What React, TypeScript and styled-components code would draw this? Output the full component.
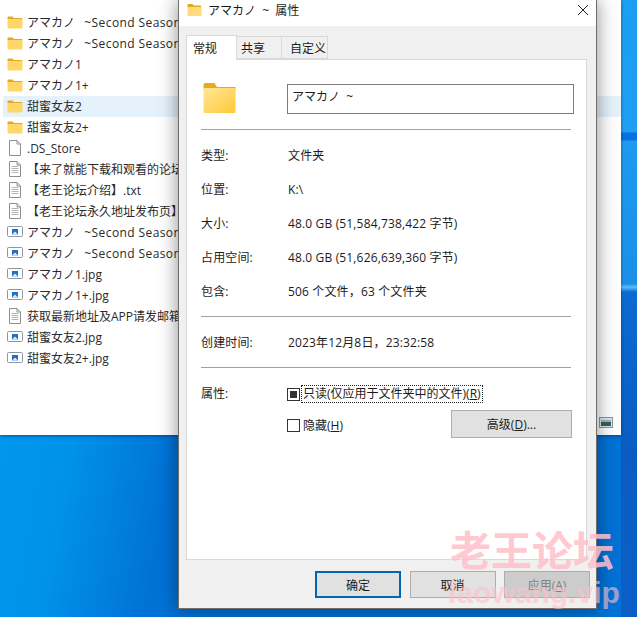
import styled, { createGlobalStyle } from "styled-components";

const GlobalStyle = createGlobalStyle`
  html, body {
    margin: 0;
    padding: 0;
    height: 100%;
    overflow: hidden;
  }
  * {
    box-sizing: border-box;
  }
  body {
    font-family: "Open Sans", "Noto Sans CJK SC", sans-serif;
    font-size: 12px;
    color: #1c1c1c;
  }
`;

const Desktop = styled.div`
  position: relative;
  width: 637px;
  height: 617px;
  overflow: hidden;
  background:
    linear-gradient(
        to bottom,
        #1b9ff0 0,
        #1f9ef2 132px,
        #0870e0 133px,
        #0870e0 140px,
        #1e9af0 141px,
        #1b8fe8 284px,
        #5cc0f5 287px,
        #0c6ad2 292px,
        #0a5cc2 450px,
        #0a5fc6 617px
      )
      right top / 16px 100% no-repeat,
    linear-gradient(100deg, #009cf2 0%, #0092ea 20%, #0072d6 34%);
`;

const Explorer = styled.div`
  position: absolute;
  left: 0;
  top: 0;
  width: 621px;
  height: 435px;
  padding-top: 12px;
  background: #fff;
  box-shadow: 0 1px 3px rgba(0, 40, 90, 0.6);
`;

const FileRow = styled.div<{ $selected?: boolean }>`
  display: flex;
  align-items: center;
  gap: 4px;
  height: 21px;
  margin-left: 3px;
  padding: 0 0 1px 4px;
  font-size: 12px;
  white-space: pre;
  overflow: hidden;
  color: #2a2a2a;
  background: ${({ $selected }) => ($selected ? "#e5f1fb" : "transparent")};
`;

const SeasonName = styled.span`
  letter-spacing: 0.4px;
`;

const RowIcon = styled.svg`
  flex: none;
  width: 16px;
  height: 16px;
`;

const EdgeIcon = styled.svg`
  position: absolute;
  right: 8px;
  bottom: 7px;
  width: 14px;
  height: 11px;
`;

const Dialog = styled.div`
  position: absolute;
  left: 178px;
  top: 0;
  width: 419px;
  height: 609px;
  display: flex;
  flex-direction: column;
  background: #f0f0f0;
  border: 1px solid #6e6e6e;
  border-top: none;
  box-shadow: 0 0 18px rgba(0, 0, 0, 0.45);
`;

const TitleBar = styled.div`
  display: flex;
  align-items: center;
  height: 26px;
  padding: 0 7px 6px 8px;
  background: #fff;
  white-space: pre;
`;

const TitleText = styled.span`
  flex: 1;
  margin-left: 5px;
`;

const TabStrip = styled.div`
  display: flex;
  align-items: flex-end;
  height: 33px;
  margin-left: 7px;
`;

const Tab = styled.div<{ $active?: boolean; $width: number; $indent: number }>`
  position: relative;
  z-index: ${({ $active }) => ($active ? 1 : 0)};
  display: flex;
  align-items: center;
  width: ${({ $width }) => $width}px;
  height: ${({ $active }) => ($active ? "25px" : "23px")};
  padding-left: ${({ $indent }) => $indent}px;
  margin-bottom: ${({ $active }) => ($active ? "-1px" : "0")};
  background: ${({ $active }) => ($active ? "#fff" : "#f0f0f0")};
  border: 1px solid #d9d9d9;
  border-bottom: ${({ $active }) => ($active ? "none" : "1px solid #d9d9d9")};
  border-left: ${({ $active }) => ($active ? "1px solid #d9d9d9" : "none")};
`;

const TabPanel = styled.div`
  height: 501px;
  margin: 0 9px 0 7px;
  padding: 23px 15px 0 14px;
  background: #fff;
  border: 1px solid #d9d9d9;
`;

const NameRow = styled.div`
  display: flex;
  align-items: flex-start;
  gap: 51px;
  padding-left: 2px;
  height: 46px;
`;

const BigFolder = styled.svg`
  flex: none;
  width: 33px;
  height: 32px;
  margin-top: -1px;
`;

const NameInput = styled.div`
  flex: none;
  width: 287px;
  height: 30px;
  margin-top: 1px;
  padding: 2px 4px;
  border: 1px solid #7a7a7a;
  white-space: pre;
`;

const Divider = styled.div`
  height: 1px;
  width: 370px;
  background: #a0a0a0;
`;

const InfoGroup = styled.div`
  padding: 8px 0;
`;

const InfoRow = styled.div`
  display: grid;
  grid-template-columns: 87px 1fr;
  align-items: center;
  height: 34px;
  letter-spacing: 0.15px;
`;

const AttrGroup = styled.div`
  display: grid;
  grid-template-columns: 86px 1fr;
  padding-top: 17px;
`;

const AttrLabel = styled.div`
  line-height: 17px;
`;

const CheckRow = styled.div`
  display: flex;
  align-items: center;
  gap: 2px;
  height: 18px;
`;

const CheckBox = styled.span<{ $mixed?: boolean }>`
  display: flex;
  align-items: center;
  justify-content: center;
  flex: none;
  width: 13px;
  height: 13px;
  border: 1px solid #333;
  background: #fff;
  &::after {
    content: "";
    display: ${({ $mixed }) => ($mixed ? "block" : "none")};
    width: 7px;
    height: 7px;
    background: #333;
  }
`;

const FocusLabel = styled.span`
  padding: 0 1px;
  line-height: 16px;
  outline: 1px dotted #222;
  white-space: nowrap;
`;

const HiddenLine = styled.div`
  display: flex;
  align-items: center;
  justify-content: space-between;
  width: 285px;
  margin-top: 7px;
`;

const HiddenCheck = styled(CheckRow)`
  margin-top: 2px;
  gap: 3px;
`;

const Key = styled.span`
  text-decoration: underline;
`;

const Button = styled.div<{ $primary?: boolean; $disabled?: boolean }>`
  display: flex;
  align-items: center;
  justify-content: center;
  height: 27px;
  background: ${({ $disabled }) => ($disabled ? "#cccccc" : "#e1e1e1")};
  border: ${({ $primary }) => ($primary ? "2px solid #0067b4" : "1px solid #adadad")};
  color: ${({ $disabled }) => ($disabled ? "#808080" : "#1c1c1c")};
`;

const AdvancedButton = styled(Button)`
  width: 121px;
  height: 28px;
`;

const Footer = styled.div`
  display: grid;
  grid-template-columns: repeat(3, 86px);
  column-gap: 8.5px;
  justify-content: end;
  padding: 11px 6px 0 0;
`;

const Watermark = styled.div`
  position: absolute;
  left: 446px;
  top: 519px;
  width: 172px;
  display: flex;
  flex-direction: column;
  align-items: center;
  color: #ffc0cb;
  font-weight: 700;
  pointer-events: none;
`;

const MarkTitle = styled.div`
  font-family: "Noto Sans CJK SC", sans-serif;
  font-size: 41px;
  line-height: 58px;
  opacity: 0.85;
`;

const MarkUrl = styled.div`
  margin-left: 4px;
  font-family: "Liberation Sans", sans-serif;
  font-size: 30px;
  line-height: 31px;
  opacity: 0.6;
`;

const FolderIcon = () => (
  <RowIcon viewBox="0 0 16 16">
    <path d="M0.500 3.500a1 1 0 0 1 1-1h4l1.500 1.500h7.500a1 1 0 0 1 1 1V5H0.500z" fill="#e6a823" />
    <path d="M0.500 5h15v8.500a1 1 0 0 1-1 1h-13a1 1 0 0 1-1-1z" fill="#ffd766" />
  </RowIcon>
);

const DocIcon = ({ lines }: { lines?: boolean }) => (
  <RowIcon viewBox="0 0 16 16">
    <path d="M2.500 0.500h7.500l3.500 3.500v11.500h-11z" fill="#fff" stroke="#8e8e8e" />
    <path d="M10 0.500v3.500h3.500" fill="none" stroke="#8e8e8e" />
    {lines && <path d="M4.500 5.500h7M4.500 7.500h7M4.500 9.500h7M4.500 11.500h7" stroke="#b5b5b5" />}
  </RowIcon>
);

const ImageIcon = () => (
  <RowIcon viewBox="0 0 16 16">
    <rect x="0.500" y="2.500" width="15" height="10" rx="1" fill="#fff" stroke="#8a98a6" />
    <rect x="5" y="5" width="6" height="5.500" fill="#1f6fc4" />
    <path d="M5 10.500l3-3 3 3z" fill="#dfeefa" />
  </RowIcon>
);

type FileKind = "folder" | "doc" | "lines" | "image";

const files: { name: string; season?: string; kind: FileKind; selected?: boolean }[] = [
  { name: "アマカノ   ", season: "~Second Season~", kind: "folder" },
  { name: "アマカノ   ", season: "~Second Season+~", kind: "folder" },
  { name: "アマカノ1", kind: "folder" },
  { name: "アマカノ1+", kind: "folder" },
  { name: "甜蜜女友2", kind: "folder", selected: true },
  { name: "甜蜜女友2+", kind: "folder" },
  { name: ".DS_Store", kind: "doc" },
  { name: "【来了就能下载和观看的论坛】.txt", kind: "lines" },
  { name: "【老王论坛介绍】.txt", kind: "lines" },
  { name: "【老王论坛永久地址发布页】.txt", kind: "lines" },
  { name: "アマカノ   ", season: "~Second Season~.jpg", kind: "image" },
  { name: "アマカノ   ", season: "~Second Season+~.jpg", kind: "image" },
  { name: "アマカノ1.jpg", kind: "image" },
  { name: "アマカノ1+.jpg", kind: "image" },
  { name: "获取最新地址及APP请发邮箱.txt", kind: "lines" },
  { name: "甜蜜女友2.jpg", kind: "image" },
  { name: "甜蜜女友2+.jpg", kind: "image" },
];

const info = [
  ["类型:", "文件夹"],
  ["位置:", "K:\\"],
  ["大小:", "48.0 GB (51,584,738,422 字节)"],
  ["占用空间:", "48.0 GB (51,626,639,360 字节)"],
  ["包含:", "506 个文件\uFF0C63 个文件夹"],
];

const App = () => {
  return (
    <Desktop>
      <GlobalStyle />
      <Explorer>
        {files.map((file) => (
          <FileRow key={file.name + (file.season ?? "")} $selected={file.selected}>
            {file.kind === "folder" && <FolderIcon />}
            {file.kind === "doc" && <DocIcon />}
            {file.kind === "lines" && <DocIcon lines />}
            {file.kind === "image" && <ImageIcon />}
            <span>
              {file.name}
              {file.season && <SeasonName>{file.season}</SeasonName>}
            </span>
          </FileRow>
        ))}
        <EdgeIcon viewBox="0 0 14 11">
          <rect x="0.500" y="0.500" width="13" height="10" fill="#dfe8ee" stroke="#8b98a3" />
          <path d="M2 3h10v2H2z" fill="#8fb8d8" />
          <path d="M2 5h10v4H2z" fill="#3f5c58" />
        </EdgeIcon>
      </Explorer>
      <Dialog>
        <TitleBar>
          <RowIcon viewBox="0 0 16 16">
            <path d="M0.500 3a1 1 0 0 1 1-1h4l1.500 1.500h7V5H0.500z" fill="#e6a823" />
            <path d="M0.500 5h14v8a1 1 0 0 1-1 1h-12a1 1 0 0 1-1-1z" fill="#ffdc7a" />
          </RowIcon>
          <TitleText>アマカノ  ~  属性</TitleText>
          <svg width="12" height="12" viewBox="0 0 12 12">
            <path d="M1 1l10 10M11 1L1 11" stroke="#222" strokeWidth="1" fill="none" />
          </svg>
        </TitleBar>
        <TabStrip>
          <Tab $active $width={51} $indent={6}>
            常规
          </Tab>
          <Tab $width={45} $indent={4}>
            共享
          </Tab>
          <Tab $width={46} $indent={8}>
            自定义
          </Tab>
        </TabStrip>
        <TabPanel>
          <NameRow>
            <BigFolder viewBox="0 0 33 32">
              <path d="M0.500 3a2 2 0 0 1 2-2h9l2.500 4h18.500v3H0.500z" fill="#e9a91f" />
              <defs>
                <linearGradient id="bigFolder" x1="0" y1="0" x2="1" y2="1">
                  <stop offset="0" stopColor="#ffe79a" />
                  <stop offset="1" stopColor="#ffc935" />
                </linearGradient>
              </defs>
              <path d="M0.500 6h32v24a1 1 0 0 1-1 1h-30a1 1 0 0 1-1-1z" fill="url(#bigFolder)" />
            </BigFolder>
            <NameInput>アマカノ  ~</NameInput>
          </NameRow>
          <Divider />
          <InfoGroup>
            {info.map(([label, value]) => (
              <InfoRow key={label}>
                <span>{label}</span>
                <span>{value}</span>
              </InfoRow>
            ))}
          </InfoGroup>
          <Divider />
          <InfoGroup>
            <InfoRow>
              <span>创建时间:</span>
              <span>{"2023年12月8日\uFF0C23:32:58"}</span>
            </InfoRow>
          </InfoGroup>
          <Divider />
          <AttrGroup>
            <AttrLabel>属性:</AttrLabel>
            <div>
              <CheckRow>
                <CheckBox $mixed />
                <FocusLabel>
                  只读(仅应用于文件夹中的文件)(<Key>R</Key>)
                </FocusLabel>
              </CheckRow>
              <HiddenLine>
                <HiddenCheck>
                  <CheckBox />
                  <span>
                    隐藏(<Key>H</Key>)
                  </span>
                </HiddenCheck>
                <AdvancedButton>
                  <span>
                    高级(<Key>D</Key>)...
                  </span>
                </AdvancedButton>
              </HiddenLine>
            </div>
          </AttrGroup>
        </TabPanel>
        <Footer>
          <Button $primary>确定</Button>
          <Button>取消</Button>
          <Button $disabled>
            <span>
              应用(<Key>A</Key>)
            </span>
          </Button>
        </Footer>
      </Dialog>
      <Watermark>
        <MarkTitle>老王论坛</MarkTitle>
        <MarkUrl>laowang.vip</MarkUrl>
      </Watermark>
    </Desktop>
  );
};

export default App;
